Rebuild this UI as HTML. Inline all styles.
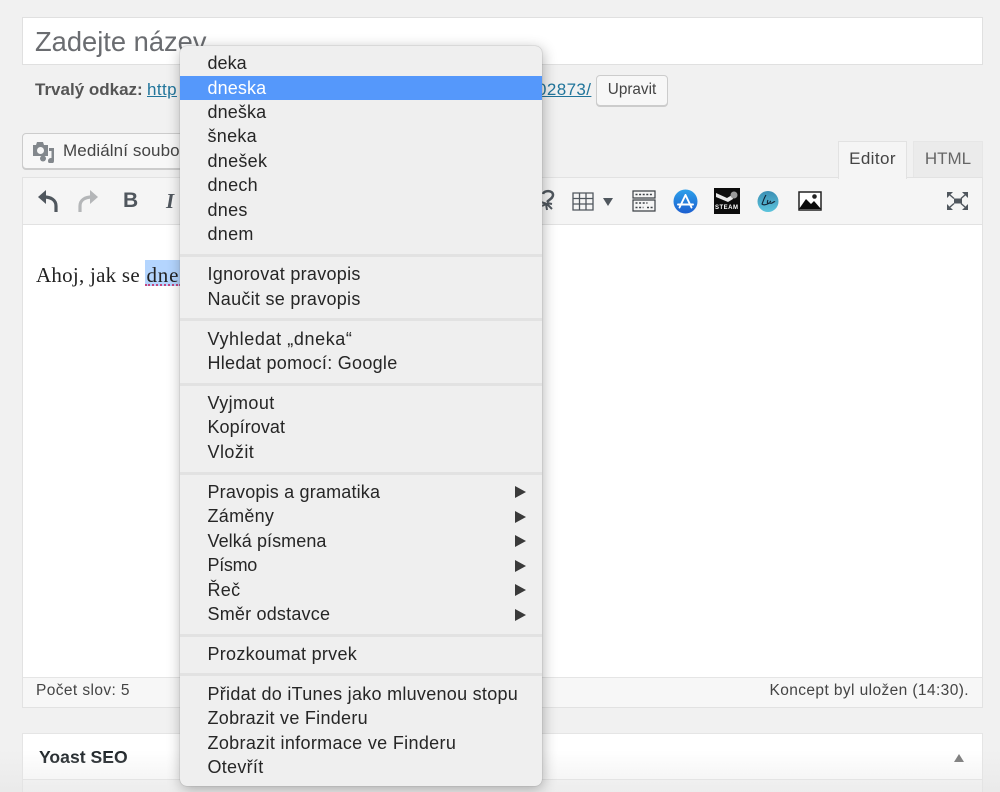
<!DOCTYPE html>
<html lang="cs"><head><meta charset="utf-8"><title>Editor</title>
<style>
html,body{margin:0;padding:0;width:1000px;height:792px;overflow:hidden;background:#f1f1f1}
body{position:relative;font-family:"Liberation Sans",sans-serif;color:#333}
.a{position:absolute;white-space:nowrap}
.box{position:absolute;box-sizing:border-box}
#menu{position:absolute;left:180px;top:46px;width:362px;height:740px;background:#efefef;border-radius:7px;box-shadow:0 0 1px #888,1px 3px 14px rgba(0,0,0,.3);overflow:hidden}
#menu .i{position:absolute;left:27.5px;font-size:18px;line-height:24px;height:24px;color:#262626;white-space:nowrap;letter-spacing:.28px}
#menu .s{position:absolute;left:0;width:362px;height:3px;background:#e2e2e2}
#menu .t{position:absolute;left:335px;width:0;height:0;border-left:11px solid #3a3a3a;border-top:6px solid transparent;border-bottom:6px solid transparent}
</style></head><body>

<div class="box" style="left:22px;top:17px;width:961px;height:48px;background:#fff;border:1px solid #e0e0e0"></div>
<div class="a" style="left:35px;top:26px;font-size:27.3px;line-height:32px;color:#6a6c70">Zadejte název</div>

<div class="a" style="left:35px;top:80px;font-size:17px;line-height:20px;font-weight:bold;color:#555">Trvalý odkaz:</div>
<div class="a" style="left:147px;top:80px;font-size:17px;line-height:20px;color:#21759b;text-decoration:underline;letter-spacing:.4px">http</div>
<div class="a" style="left:537px;top:80px;font-size:17px;line-height:20px;color:#21759b;text-decoration:underline;letter-spacing:.4px">02873/</div>
<div class="box" style="left:596px;top:75px;width:72px;height:31px;background:#f7f7f7;border:1px solid #ccc;border-radius:4px;box-shadow:0 1px 0 #ccc;font-size:15.3px;line-height:28px;text-align:center;color:#444">Upravit</div>

<div class="box" style="left:22px;top:133px;width:170px;height:36px;background:#f7f7f7;border:1px solid #ccc;border-radius:4px;box-shadow:0 1px 0 #ccc"></div>
<svg class="a" style="left:32px;top:141px" width="24" height="22" viewBox="0 0 24 22"><path fill="#82878c" d="M1 4h3l1-3h6l1 3h4v11H1z"/><circle cx="8.500" cy="9.500" r="3.500" fill="#f7f7f7"/><path fill="#82878c" d="M17 7h5v13a3 3 0 1 1-2.500-3V10H17z"/><circle cx="11" cy="17.500" r="3" fill="#82878c"/></svg>
<div class="a" style="left:63px;top:141px;font-size:17px;line-height:20px;color:#444;letter-spacing:.1px">Mediální soubo</div>

<!-- editor frame -->
<div class="box" style="left:22px;top:177px;width:961px;height:531px;background:#fff;border:1px solid #e2e2e2"></div>
<div class="box" style="left:23px;top:178px;width:959px;height:47px;background:#f5f5f5;border-bottom:1px solid #e2e2e2"></div>
<div class="box" style="left:23px;top:677px;width:959px;height:30px;background:#f7f7f7;border-top:1px solid #e5e5e5"></div>

<!-- tabs -->
<div class="box" style="left:838px;top:141px;width:69px;height:38px;background:#f5f5f5;border:1px solid #e2e2e2;border-bottom:0;font-size:17px;line-height:34px;text-align:center;color:#444;letter-spacing:.4px">Editor</div>
<div class="box" style="left:913px;top:141px;width:70px;height:36px;background:#ebebeb;border:1px solid #e6e6e6;border-bottom:0;font-size:17px;line-height:34px;text-align:center;color:#666">HTML</div>

<!-- toolbar icons -->
<svg class="a" style="left:36px;top:188px" width="24" height="26" viewBox="0 0 24 26"><path fill="#50575e" d="M2 9 10 2v14z"/><path fill="none" stroke="#50575e" stroke-width="3.200" d="M8 9c7 0 12 3 12 9v6"/></svg>
<svg class="a" style="left:76px;top:188px" width="24" height="26" viewBox="0 0 24 26"><path fill="#b4b6b8" d="M22 9 14 2v14z"/><path fill="none" stroke="#b4b6b8" stroke-width="3.200" d="M16 9C9 9 4 12 4 18v6"/></svg>
<div class="a" style="left:123px;top:189px;font-size:21px;line-height:24px;font-weight:bold;color:#50575e">B</div>
<div class="a" style="left:166px;top:189px;font-size:21px;line-height:24px;font-weight:bold;font-style:italic;font-family:'Liberation Serif',serif;color:#50575e">I</div>

<svg class="a" style="left:540px;top:188px" width="16" height="25" viewBox="0 0 16 25"><path fill="none" stroke="#50575e" stroke-width="2.500" d="M3 6c1-4 10-4 10 1 0 3-3 4-6 7"/><path fill="none" stroke="#50575e" stroke-width="2" d="M1 14l6 2M2 18l4-2M6 16l1 6M7 16l5 5M7 15l5 1"/></svg>
<svg class="a" style="left:572px;top:192px" width="22" height="19" viewBox="0 0 22 19"><path fill="none" stroke="#50575e" stroke-width="1.300" d="M1 1h20v17H1zM1 6.500h20M1 12h20M7.500 1v17M14 1v17"/></svg>
<div class="a" style="left:603px;top:198px;width:0;height:0;border-top:8px solid #50575e;border-left:5.500px solid transparent;border-right:5.500px solid transparent"></div>
<svg class="a" style="left:632px;top:190px" width="24" height="22" viewBox="0 0 24 22"><path fill="none" stroke="#3c4146" stroke-width="1.200" d="M1 1h22v7H1zM1 10h22v11H1z"/><path fill="none" stroke="#3c4146" stroke-width="1.500" stroke-dasharray="2 1.600" d="M3.500 4.500h17M3.500 13h12M3.500 17.500h8M15 17.500h6"/></svg>
<svg class="a" style="left:673px;top:189px" width="25" height="25" viewBox="0 0 25 25"><defs><linearGradient id="g1" x1="0" y1="0" x2="0" y2="1"><stop offset="0" stop-color="#2da0ea"/><stop offset="1" stop-color="#1c5fd0"/></linearGradient></defs><circle cx="12.500" cy="12.500" r="12" fill="url(#g1)"/><path fill="none" stroke="#fff" stroke-width="1.900" stroke-linecap="round" d="M12.500 6 6.500 18.500M12.500 6l6 12.500M5 15.500h15"/></svg>
<svg class="a" style="left:714px;top:188px" width="27" height="27" viewBox="0 0 27 27"><rect width="26" height="26" fill="#0c0c0c"/><path fill="#e8e8e8" d="M2 5l11 5 5-3 1 4-5 3L2 9z"/><circle cx="20" cy="7" r="3.500" fill="#999"/></svg>
<div class="a" style="left:715px;top:204px;font-size:6px;line-height:8px;font-weight:bold;color:#fff;letter-spacing:.5px">STEAM</div>
<svg class="a" style="left:757px;top:190px" width="22" height="23" viewBox="0 0 22 23"><defs><linearGradient id="g2" x1="0" y1="0" x2="0" y2="1"><stop offset="0" stop-color="#3b8fb4"/><stop offset="1" stop-color="#5cc4dc"/></linearGradient></defs><circle cx="11" cy="11.500" r="10.500" fill="url(#g2)"/><path fill="none" stroke="#123" stroke-width="1.100" d="M9 5c-2 3-3 7-4 9 2 2 5 0 8-1M11 10c-1 2-1 4 1 3M14 11c-2 1-1 3 1 2s2-2 3-1"/></svg>
<svg class="a" style="left:798px;top:191px" width="24" height="20" viewBox="0 0 24 20"><rect x="1" y="1" width="22" height="18" fill="#fff" stroke="#222" stroke-width="1.500"/><path fill="#0c0c0c" d="M1 18 8 8l5 5 3-3 7 8z"/><circle cx="16.500" cy="5.500" r="2.300" fill="#222"/></svg>
<svg class="a" style="left:946px;top:191px" width="23" height="20" viewBox="0 0 23 20"><path fill="#50575e" d="M1 1h6L1 7zM22 1h-6l6 6zM1 19h6l-6-6zM22 19h-6l6-6z"/><path fill="none" stroke="#50575e" stroke-width="1.400" d="M4 4l4 3.500M19 4l-4 3.500M4 16l4-3.500M19 16l-4-3.500"/><rect x="8" y="7.500" width="8" height="5" fill="#50575e"/></svg>

<!-- content -->
<div class="a" style="left:145px;top:260px;width:36px;height:26px;background:#b4d5fe"></div>
<div class="a" style="left:145px;top:284px;width:36px;height:0;border-top:2px dotted #c2477f"></div>
<div class="a" style="left:36px;top:263px;font-family:'Liberation Serif',serif;font-size:21px;line-height:24px;color:#222;letter-spacing:.25px">Ahoj, jak se</div>
<div class="a" style="left:146.500px;top:263px;font-family:'Liberation Serif',serif;font-size:21px;line-height:24px;color:#222;letter-spacing:.8px">dne</div>

<div class="a" style="left:36px;top:682px;font-size:15.5px;line-height:18px;color:#444;letter-spacing:.4px">Počet slov: 5</div>
<div class="a" style="right:31px;top:682px;font-size:15.5px;line-height:18px;color:#444;letter-spacing:.4px">Koncept byl uložen (14:30).</div>

<!-- Yoast -->
<div class="box" style="left:22px;top:733px;width:961px;height:59px;background:#fff;border:1px solid #e5e5e5;border-bottom:0"></div>
<div class="box" style="left:23px;top:779px;width:959px;height:13px;background:#f7f7f7;border-top:1px solid #e5e5e5"></div>
<div class="a" style="left:39px;top:747px;font-size:17.6px;line-height:20px;font-weight:bold;color:#1d2327">Yoast SEO</div>
<div class="a" style="left:954px;top:754px;width:0;height:0;border-bottom:8px solid #777;border-left:5.500px solid transparent;border-right:5.500px solid transparent"></div>
<div class="box" style="left:0;top:750px;width:1000px;height:42px;background:linear-gradient(to bottom,rgba(230,230,230,0),rgba(225,225,225,.45))"></div>

<!-- context menu -->
<div id="menu">
<div class="i" style="top:5px;letter-spacing:.05px">deka</div>
<div style="position:absolute;left:0;top:30px;width:362px;height:24px;background:#5598fb"></div>
<div class="i" style="top:30px;color:#fff;letter-spacing:.12px">dneska</div>
<div class="i" style="top:54px;letter-spacing:.12px">dneška</div>
<div class="i" style="top:78px">šneka</div>
<div class="i" style="top:103px">dnešek</div>
<div class="i" style="top:127px">dnech</div>
<div class="i" style="top:152px">dnes</div>
<div class="i" style="top:176px">dnem</div>
<div class="s" style="top:208px"></div>
<div class="i" style="top:216px">Ignorovat pravopis</div>
<div class="i" style="top:241px">Naučit se pravopis</div>
<div class="s" style="top:272px"></div>
<div class="i" style="top:281px;letter-spacing:.6px">Vyhledat „dneka“</div>
<div class="i" style="top:305px">Hledat pomocí: Google</div>
<div class="s" style="top:337px"></div>
<div class="i" style="top:345px;letter-spacing:.4px">Vyjmout</div>
<div class="i" style="top:369px;letter-spacing:.05px">Kopírovat</div>
<div class="i" style="top:394px;letter-spacing:.45px">Vložit</div>
<div class="s" style="top:426px"></div>
<div class="i" style="top:434px;letter-spacing:.18px">Pravopis a gramatika</div><div class="t" style="top:440px"></div>
<div class="i" style="top:458px">Záměny</div><div class="t" style="top:465px"></div>
<div class="i" style="top:483px;letter-spacing:.07px">Velká písmena</div><div class="t" style="top:489px"></div>
<div class="i" style="top:507px;letter-spacing:-.3px">Písmo</div><div class="t" style="top:514px"></div>
<div class="i" style="top:532px">Řeč</div><div class="t" style="top:538px"></div>
<div class="i" style="top:556px;letter-spacing:.2px">Směr odstavce</div><div class="t" style="top:563px"></div>
<div class="s" style="top:588px"></div>
<div class="i" style="top:596px">Prozkoumat prvek</div>
<div class="s" style="top:627px"></div>
<div class="i" style="top:636px">Přidat do iTunes jako mluvenou stopu</div>
<div class="i" style="top:660px">Zobrazit ve Finderu</div>
<div class="i" style="top:685px;letter-spacing:.33px">Zobrazit informace ve Finderu</div>
<div class="i" style="top:709px">Otevřít</div>
</div>
</body></html>
